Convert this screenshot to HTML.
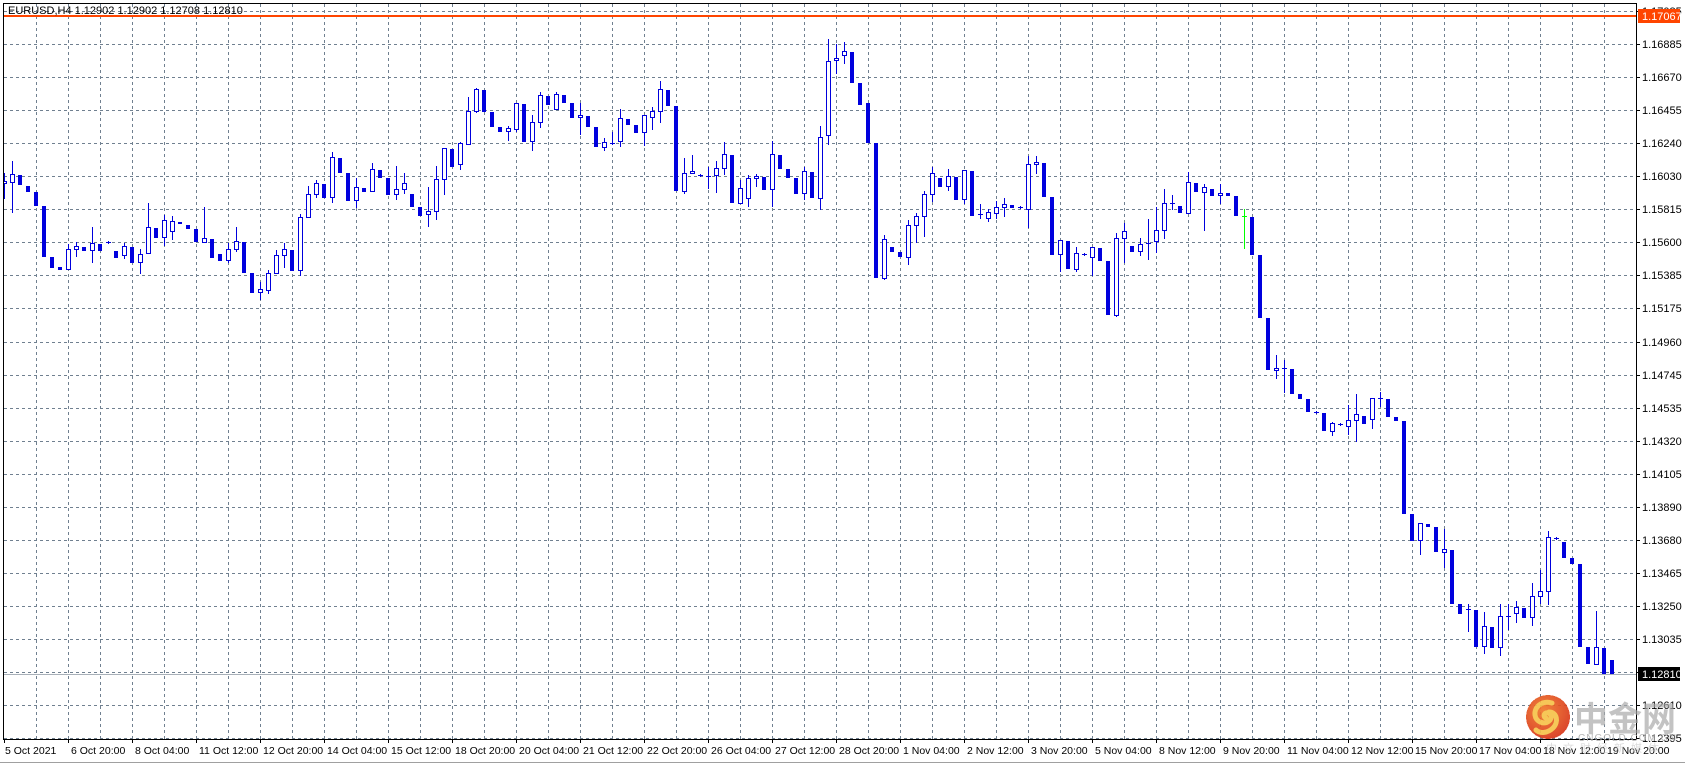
<!DOCTYPE html>
<html><head><meta charset="utf-8">
<style>
html,body{margin:0;padding:0;background:#fff;width:1685px;height:765px;overflow:hidden}
svg{display:block}
text{font-family:"Liberation Sans","DejaVu Sans",sans-serif}
</style></head>
<body>
<svg id="s" width="1685" height="765" viewBox="0 0 1685 765" xmlns="http://www.w3.org/2000/svg" shape-rendering="crispEdges">
<defs>
<clipPath id="cp"><rect x="4" y="4" width="1632" height="735"/></clipPath>
<radialGradient id="lg" cx="40%" cy="35%" r="70%"><stop offset="0" stop-color="#f07a2a"/><stop offset="1" stop-color="#d8341a"/></radialGradient>
</defs>
<rect width="1685" height="765" fill="#fff"/>
<g id="grid"></g>
<g id="candles" clip-path="url(#cp)"></g>
<line x1="4" y1="674.5" x2="1636" y2="674.5" stroke="#a8b0b8" stroke-width="1"/>
<rect x="4" y="15" width="1632" height="2" fill="#ff4500"/>
<rect x="3.5" y="3.5" width="1633" height="736" fill="none" stroke="#000" stroke-width="1"/>
<g id="axis"></g>
<text x="8" y="14" font-size="11" fill="#000">EURUSD,H4  1.12902 1.12902 1.12708 1.12810</text>
<rect x="1638" y="9" width="42" height="14" fill="#ff4500"/>
<text x="1642" y="20" font-size="11" fill="#fff">1.17067</text>
<rect x="1638" y="667" width="42" height="14" fill="#000"/>
<text x="1642" y="678" font-size="11" fill="#fff">1.12810</text>
<g opacity="0.92">
<circle cx="1548" cy="717" r="22" fill="url(#lg)"/>
<path d="M1552 703c-10-3-18 4-17 12 1 7 9 10 14 6 4-3 2-9-3-8-3 1-2 5 0 5M1549 712c8 0 10 10 4 16-5 5-13 6-17 2" fill="none" stroke="#f6c34a" stroke-width="5" stroke-linecap="round" shape-rendering="auto"/>
<text x="1574" y="731" font-size="34" font-weight="bold" fill="#a8a8a8" opacity="0.75" style='font-family:"Liberation Sans","Noto Sans CJK SC",sans-serif'>中金网</text>
<text x="1578" y="741" font-size="10" fill="#b0b0b0" letter-spacing="1">CNGOLD.COM.CN</text>
<text x="1546" y="752" font-size="11" fill="#c8c8c8" opacity="0.7" letter-spacing="6" style='font-family:"Liberation Sans","Noto Sans CJK SC",sans-serif'>中文财经新媒体</text>
</g>
<line x1="0" y1="762.5" x2="1685" y2="762.5" stroke="#a0a0a0"/>
</svg>
<script>
(function(){
var NS="http://www.w3.org/2000/svg";
function el(p,t,a,txt){var e=document.createElementNS(NS,t);for(var q in a)e.setAttribute(q,a[q]);if(txt!=null)e.textContent=txt;p.appendChild(e);return e;}
var G=document.getElementById('grid');
for(var k=0;k<=22;k++){var y=Math.round(11+33.05*k)+0.5;el(G,'line',{x1:4,y1:y,x2:1636,y2:y,stroke:'#708090','stroke-dasharray':'3,3'});}
for(var k=0;k<50;k++){var x=36+32*k+0.5;el(G,'line',{x1:x,y1:4,x2:x,y2:739,stroke:'#708090','stroke-dasharray':'3,3'});}
var A=document.getElementById('axis');
var P=["1.17085","1.16885","1.16670","1.16455","1.16240","1.16030","1.15815","1.15600","1.15385","1.15175","1.14960","1.14745","1.14535","1.14320","1.14105","1.13890","1.13680","1.13465","1.13250","1.13035","1.12820","1.12610","1.12395"];
for(var k=0;k<=22;k++){var y=Math.round(11+33.05*k);el(A,'rect',{x:1636,y:y,width:4,height:1,fill:'#000'});if(k!=20)el(A,'text',{x:1642,y:y+4,'font-size':11,fill:'#000'},P[k]);}
var T=["5 Oct 2021","6 Oct 20:00","8 Oct 04:00","11 Oct 12:00","12 Oct 20:00","14 Oct 04:00","15 Oct 12:00","18 Oct 20:00","20 Oct 04:00","21 Oct 12:00","22 Oct 20:00","26 Oct 04:00","27 Oct 12:00","28 Oct 20:00","1 Nov 04:00","2 Nov 12:00","3 Nov 20:00","5 Nov 04:00","8 Nov 12:00","9 Nov 20:00","11 Nov 04:00","12 Nov 12:00","15 Nov 20:00","17 Nov 04:00","18 Nov 12:00","19 Nov 20:00"];
for(var k=0;k<T.length;k++){var x=4+64*k;el(A,'rect',{x:x,y:739,width:1,height:4,fill:'#000'});el(A,'text',{x:x+(k==0?1:3),y:754,'font-size':10.5,fill:'#000'},T[k]);}
var D=[[183,181,173,198],[182,174,161,212],[175,184],[186,191],[192,205],[206,256],[257,267],[267,269],[269,249,244,269],[249,246,242,256],
[247,250],[250,243,227,262],[244,250],[242,242,241,243],[251,257],[255,246,243,258],[247,262],[262,254,249,273],[253,227,203,253],[228,237],
[237,220,215,245],[231,221,216,239],[222,223],[225,228],[229,241],[242,238,207,242],[239,257],[254,260],[260,249,243,262],[249,241,227,251],
[242,272],[273,292],[292,289,282,299],[290,273,270,293],[273,255,250,273],[255,249,243,267],[250,270],[270,217,214,275],[217,194,186,217],[194,183,180,197],
[184,197],[197,157,152,202],[158,172],[173,200],[200,187,178,207],[188,191],[191,169,163,191],[170,177],[178,194],[194,189,166,199],
[189,183,173,193],[194,206],[207,215],[214,211,187,226],[211,179,166,219],[179,148,148,194],[149,166],[164,143,142,169],[144,111,97,144],[111,89,88,112],
[90,111],[112,126],[127,131],[131,128,126,140],[129,103,103,131],[104,141],[141,122,115,150],[122,95,92,127],[96,104],[109,94,92,109],
[95,102],[103,117],[117,115,103,134],[116,126],[127,146],[147,142,138,150],[143,143,132,144],[141,118,109,146],[119,124],[125,132],
[132,115,115,145],[117,111,107,129],[111,89,81,122],[90,105],[106,190],[191,173,158,193],[173,171,155,173],[175,175,174,176],[176,176,167,188],[175,168,161,192],
[168,154,142,174],[155,202],[203,188,180,203],[198,178,175,206],[178,176,174,186],[177,189],[189,154,141,206],[155,168],[169,177],[178,193],
[193,171,167,199],[172,197],[198,137,126,209],[135,61,39,144],[60,58,44,73],[55,51,42,63],[52,82],[83,104],[103,142],[143,277],
[278,239,235,279],[247,251],[252,256],[257,225,220,264],[225,216,213,242],[216,194,191,236],[194,173,167,201],[178,186],[186,176,169,190],[177,199],
[199,170,170,203],[171,215],[214,214,204,218],[218,212,209,221],[213,207,201,218],[207,204,198,216],[205,207],[207,207,206,208],[209,164,156,227],[164,162,156,173],
[163,196],[197,254],[254,240,240,271],[241,268],[269,253,247,271],[254,254,253,255],[257,247,247,275],[248,260],[261,314],[315,238,233,316],
[238,231,223,262],[246,251],[251,244,238,255],[243,243,219,259],[241,230,207,252],[230,203,189,238],[203,203,195,209],[206,212],[213,182,172,213],[183,191],
[192,187,184,230],[189,195],[195,193,184,203],[193,195],[196,215],[216,216,209,248,1],[217,254],[255,317],[318,369],[370,368,355,378],
[368,368,360,392],[369,393],[394,398],[399,411],[412,412,411,413],[413,430],[431,423,422,435],[424,424,423,425],[426,420,405,434],[420,414,394,441],
[416,423],[419,398,398,428],[398,398,392,406],[399,416],[417,420],[421,513],[514,540],[540,523,523,554],[524,526],[527,551],
[552,549,529,567],[550,603],[604,613],[609,609,604,631],[610,646],[646,626,612,653],[627,647],[647,616,604,655],[616,616,604,629],[613,607,601,622],
[608,617],[617,596,583,625],[596,591,570,603],[591,537,531,604],[538,538,537,539],[542,557],[558,563],[564,646],[647,663],[664,647,611,664],
[648,674],[660,673]];
var C=document.getElementById('candles');
for(var i=0;i<D.length;i++){
 var d=D[i],cx=4+8*i,o=d[0],c=d[1];
 var bt=Math.min(o,c),bb=Math.max(o,c);
 var hi=d.length>2?d[2]:bt,lo=d.length>2?d[3]:bb;
 var col=d[4]?'#00ff00':'#0000dd';
 if(hi<bt)el(C,'rect',{x:cx,y:hi,width:1,height:bt-hi,fill:col});
 if(lo>bb)el(C,'rect',{x:cx,y:bb,width:1,height:lo-bb+1,fill:col});
 if(o==c){el(C,'rect',{x:cx-2,y:o,width:5,height:1,fill:col});}
 else if(c<o){
  el(C,'rect',{x:cx-2,y:bt,width:5,height:bb-bt+1,fill:col});
  if(bb-bt>=2)el(C,'rect',{x:cx-1,y:bt+1,width:3,height:bb-bt-1,fill:'#fff'});
 } else {
  el(C,'rect',{x:cx-2,y:bt,width:4,height:bb-bt+1,fill:col});
 }
}
})();
</script>
</body></html>
